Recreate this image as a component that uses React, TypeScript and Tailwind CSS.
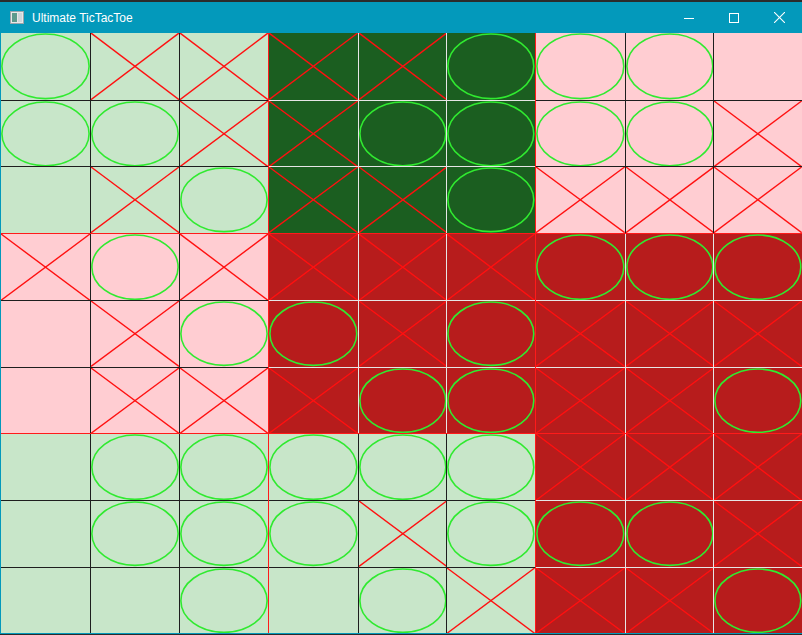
import type { FC } from 'react'

type Mark = 'X' | 'O' | ''
type BoardTone = 'lightGreen' | 'darkGreen' | 'pink' | 'darkRed'

// 9x9 board, row by row
const cells: Mark[][] = [
  ['O', 'X', 'X', 'X', 'X', 'O', 'O', 'O', ''],
  ['O', 'O', 'X', 'X', 'O', 'O', 'O', 'O', 'X'],
  ['', 'X', 'O', 'X', 'X', 'O', 'X', 'X', 'X'],
  ['X', 'O', 'X', 'X', 'X', 'X', 'O', 'O', 'O'],
  ['', 'X', 'O', 'O', 'X', 'O', 'X', 'X', 'X'],
  ['', 'X', 'X', 'X', 'O', 'O', 'X', 'X', 'O'],
  ['', 'O', 'O', 'O', 'O', 'O', 'X', 'X', 'X'],
  ['', 'O', 'O', 'O', 'X', 'O', 'O', 'O', 'X'],
  ['', '', 'O', '', 'O', 'X', 'X', 'X', 'O']
]

const tones: BoardTone[][] = [
  ['lightGreen', 'darkGreen', 'pink'],
  ['pink', 'darkRed', 'darkRed'],
  ['lightGreen', 'lightGreen', 'darkRed']
]

const toneBg: Record<BoardTone, string> = {
  lightGreen: 'bg-[#c8e6c9]',
  darkGreen: 'bg-[#1b5e20]',
  pink: 'bg-[#ffcdd2]',
  darkRed: 'bg-[#b71c1c]'
}

const isDark = (tone: BoardTone) => tone === 'darkGreen' || tone === 'darkRed'

const MarkIcon: FC<{ mark: Mark }> = ({ mark }) => {
  if (!mark) return null
  return (
    <svg className="absolute inset-0 w-full h-full" viewBox="0 0 100 100" preserveAspectRatio="none">
      {mark === 'X' ? (
        <g stroke="#ff1010" strokeWidth="1.4" vectorEffect="non-scaling-stroke">
          <line x1="0" y1="0" x2="100" y2="100" vectorEffect="non-scaling-stroke" />
          <line x1="100" y1="0" x2="0" y2="100" vectorEffect="non-scaling-stroke" />
        </g>
      ) : (
        <ellipse
          cx="50"
          cy="50"
          rx="49"
          ry="48.5"
          fill="none"
          stroke="#30ea30"
          strokeWidth="1.6"
          vectorEffect="non-scaling-stroke"
        />
      )}
    </svg>
  )
}

const SmallBoard: FC<{ br: number; bc: number }> = ({ br, bc }) => {
  const tone = tones[br][bc]
  const line = isDark(tone) ? 'border-[#e6e6e6]' : 'border-[#1e1e1e]'
  return (
    <div
      className={`grid grid-cols-3 grid-rows-3 ${toneBg[tone]} ${bc > 0 ? 'border-l border-[#ff1a1a]' : ''} ${
        br > 0 ? 'border-t border-[#ff1a1a]' : ''
      }`}
    >
      {[0, 1, 2].map((r) =>
        [0, 1, 2].map((c) => (
          <div
            key={`${r}-${c}`}
            className={`relative ${line} ${c > 0 ? 'border-l' : ''} ${r > 0 ? 'border-t' : ''}`}
          >
            <MarkIcon mark={cells[br * 3 + r][bc * 3 + c]} />
          </div>
        ))
      )}
    </div>
  )
}

const TitleBar: FC = () => (
  <div className="h-[31px] bg-[#0399bb] flex items-center text-white">
    {/* Иконка окна */}
    <svg width="14" height="13" viewBox="0 0 14 13" className="ml-[9px]">
      <rect x="0.5" y="0.5" width="13" height="12" fill="#e8e8e8" stroke="#9aa5ab" />
      <rect x="2" y="2" width="5" height="9" fill="#5d9a8c" />
      <rect x="8" y="2" width="4" height="9" fill="#cfd6da" />
    </svg>
    <span
      className="ml-[8px] text-[12px] leading-none"
      style={{ fontFamily: '"Segoe UI", "Liberation Sans", Arial, sans-serif' }}
    >
      Ultimate TicTacToe
    </span>
    <div className="ml-auto flex h-full">
      <div className="w-[45px] h-full flex items-center justify-center">
        <svg width="10" height="10" viewBox="0 0 10 10">
          <line x1="0" y1="5.5" x2="10" y2="5.5" stroke="white" strokeWidth="1" />
        </svg>
      </div>
      <div className="w-[45px] h-full flex items-center justify-center">
        <svg width="10" height="10" viewBox="0 0 10 10">
          <rect x="0.5" y="0.5" width="9" height="9" fill="none" stroke="white" strokeWidth="1" />
        </svg>
      </div>
      <div className="w-[46px] h-full flex items-center justify-center">
        <svg width="11" height="11" viewBox="0 0 11 11">
          <line x1="0" y1="0" x2="11" y2="11" stroke="white" strokeWidth="1.1" />
          <line x1="11" y1="0" x2="0" y2="11" stroke="white" strokeWidth="1.1" />
        </svg>
      </div>
    </div>
  </div>
)

export default function App() {
  return (
    <div className="w-[802px] h-[635px] bg-[#2b2b2b] flex flex-col overflow-hidden">
      <div className="h-[2px] shrink-0" />
      <div className="flex flex-col border-l border-b border-[#0399bb]">
        <TitleBar />
        <div className="h-[600px] grid grid-cols-3 grid-rows-3">
          {[0, 1, 2].map((br) => [0, 1, 2].map((bc) => <SmallBoard key={`${br}-${bc}`} br={br} bc={bc} />))}
        </div>
      </div>
    </div>
  )
}
